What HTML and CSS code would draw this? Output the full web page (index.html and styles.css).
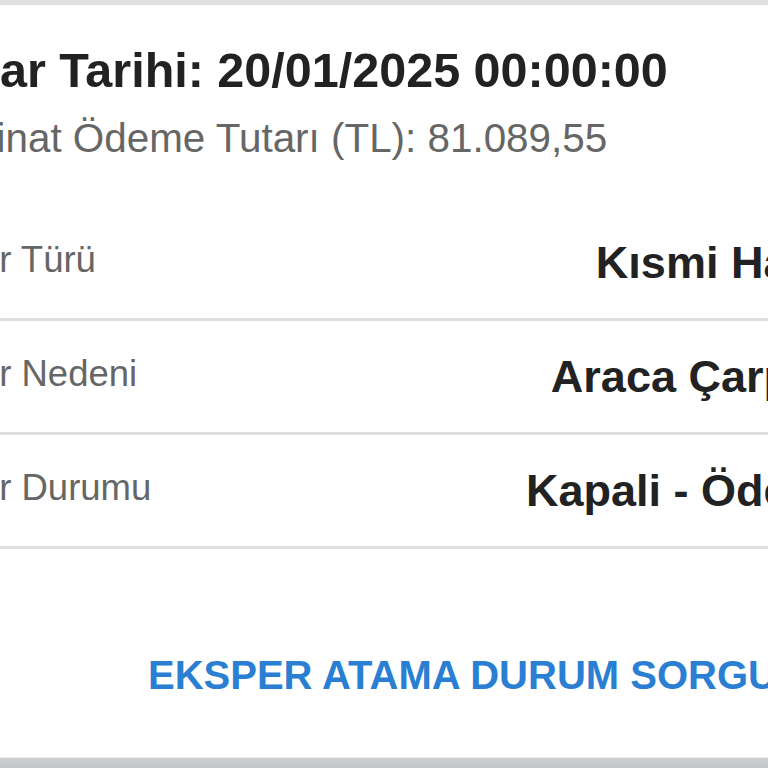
FILE: index.html
```html
<!DOCTYPE html>
<html lang="tr">
<head>
<meta charset="utf-8">
<title>Hasar Detayı</title>
<link rel="stylesheet" href="styles.css">
</head>
<body>
<div class="top-band"></div>
<main class="card">
  <div class="inner">
    <h1 class="title">Hasar Tarihi: 20/01/2025 00:00:00</h1>
    <p class="subtitle">Tazminat Ödeme Tutarı (TL): 81.089,55</p>
    <div class="rows">
      <div class="row">
        <span class="label">Hasar Türü</span>
        <span class="value">Kısmi Hasar</span>
      </div>
      <div class="row">
        <span class="label">Hasar Nedeni</span>
        <span class="value">Araca Çarpma</span>
      </div>
      <div class="row">
        <span class="label">Hasar Durumu</span>
        <span class="value">Kapali - Ödendi</span>
      </div>
    </div>
    <div class="actions">
      <a class="link" href="#">EKSPER ATAMA DURUM SORGULA</a>
    </div>
  </div>
</main>
<div class="bottom-band"></div>
</body>
</html>
```
FILE: styles.css
```css
html, body {
  margin: 0;
  padding: 0;
}
body {
  width: 768px;
  height: 768px;
  overflow: hidden;
  background: #e1e1e1;
  font-family: "Liberation Sans", Arial, sans-serif;
  display: flex;
  flex-direction: column;
}
.top-band {
  height: 5px;
  background: #e0e0e0;
  flex: none;
}
.card {
  flex: 1;
  background: #ffffff;
  overflow: hidden;
  border-bottom: 1px solid #eceef0;
}
.inner {
  margin-left: -100px;
  width: 956px;
}
.title {
  margin: 0;
  padding: 37px 0 0 11px;
  font-size: 48.5px;
  line-height: 56px;
  font-weight: bold;
  color: #222222;
  white-space: nowrap;
}
.subtitle {
  margin: 0;
  padding: 16px 0 0 0;
  font-size: 40.4px;
  line-height: 48px;
  color: #666666;
  white-space: nowrap;
}
.rows {
  margin-top: 45px;
}
.row {
  display: flex;
  justify-content: space-between;
  align-items: center;
  height: 111px;
  padding: 0 0 0 14px;
  border-bottom: 3px solid #dedede;
  white-space: nowrap;
}
.label {
  font-size: 36.5px;
  color: #666666;
  margin-top: -6px;
}
.value {
  font-size: 45px;
  font-weight: bold;
  color: #222222;
}
.actions {
  padding: 104px 0 0 248px;
}
.link {
  font-size: 40px;
  font-weight: bold;
  color: #2b7fd2;
  text-decoration: none;
  white-space: nowrap;
}
.bottom-band {
  height: 10px;
  flex: none;
  background: linear-gradient(#cfd0d2, #c3c4c6);
}
```
